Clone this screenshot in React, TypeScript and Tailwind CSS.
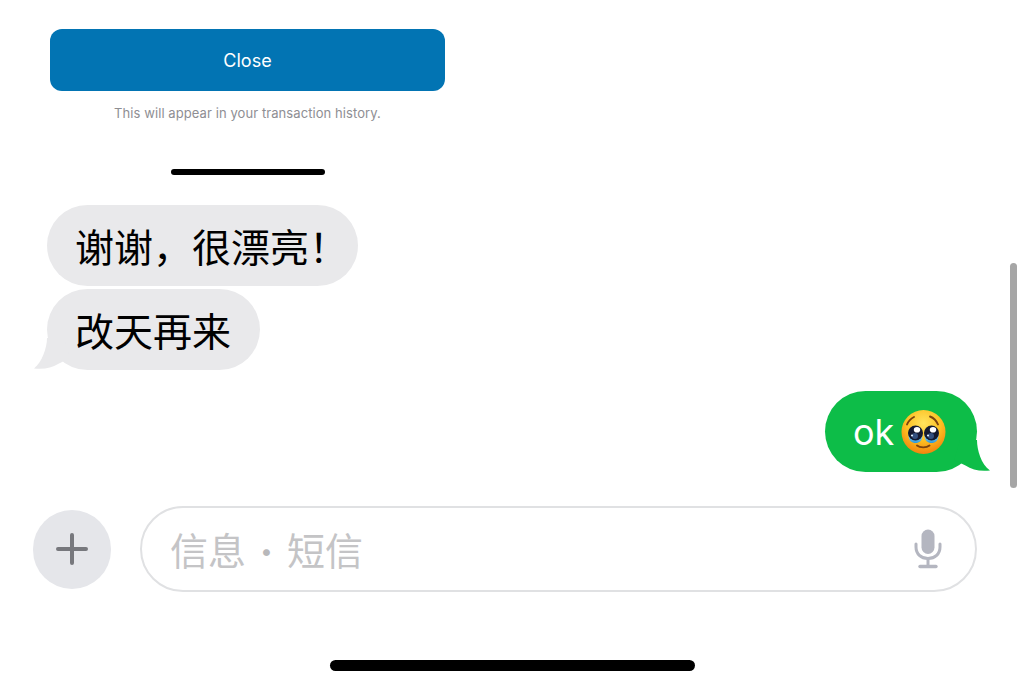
import React from "react";

const cjk = "font-['Inter','Noto_Sans_CJK_SC',sans-serif]";

function LeftTail() {
  return (
    <svg className="absolute left-[-13px] bottom-0 w-[40px] h-[32px]" viewBox="0 0 40 32">
      <path d="M13 0 C13 10 8 24 0 30.500 C10 31.500 18 30 24 26 L36 20 L30 0 Z" fill="#e9e9eb" />
    </svg>
  );
}

function RightTail() {
  return (
    <svg className="absolute right-[-13px] bottom-0 w-[40px] h-[32px]" viewBox="0 0 40 32">
      <path d="M27 0 C27 10 31 24 40 30.500 C30 31.500 22 30 15.500 25.500 L4 20 L10 0 Z" fill="#0dbd48" />
    </svg>
  );
}

function Emoji() {
  return (
    <svg width="45" height="46" viewBox="0 0 44 46" className="shrink-0">
      <defs>
        <radialGradient id="face" cx="50%" cy="30%" r="72%">
          <stop offset="0%" stopColor="#ffe45e" />
          <stop offset="55%" stopColor="#fdc022" />
          <stop offset="100%" stopColor="#f2800c" />
        </radialGradient>
        <linearGradient id="tear" x1="0" y1="0" x2="0" y2="1">
          <stop offset="0%" stopColor="#9ee0f7" />
          <stop offset="100%" stopColor="#2a97dc" />
        </linearGradient>
      </defs>
      <circle cx="22" cy="23" r="22" fill="url(#face)" />
      <path d="M5.500 15.500 C7 12 9.500 9.500 12.500 8" stroke="#7a4310" strokeWidth="1.900" fill="none" strokeLinecap="round" />
      <path d="M36.500 15.500 C35 12 32.500 9 28.500 7.500" stroke="#7a4310" strokeWidth="1.900" fill="none" strokeLinecap="round" />
      <path d="M7 26 C7 32 10.500 34 14 34 C17.500 34 21 32 21 26 Z" fill="url(#tear)" />
      <path d="M23 26 C23 32 26.500 34 30 34 C33.500 34 37 32 37 26 Z" fill="url(#tear)" />
      <circle cx="14" cy="24" r="7.500" fill="#141a30" />
      <circle cx="30" cy="24" r="7.500" fill="#141a30" />
      <circle cx="13.500" cy="27" r="3" fill="#33507f" />
      <circle cx="29.500" cy="27" r="3" fill="#33507f" />
      <ellipse cx="15.500" cy="20.800" rx="3.200" ry="2.800" fill="#ffffff" />
      <ellipse cx="31.500" cy="20.800" rx="3.200" ry="2.800" fill="#ffffff" />
      <circle cx="10.500" cy="26.500" r="1.100" fill="#dbeeff" />
      <circle cx="26.500" cy="26.500" r="1.100" fill="#dbeeff" />
      <path d="M15.500 36.500 C18.500 39 25 39 28 36.500" stroke="#7a4310" strokeWidth="1.900" fill="none" strokeLinecap="round" />
    </svg>
  );
}

function Mic() {
  return (
    <svg width="28" height="40" viewBox="0 0 28 40">
      <rect x="7.500" y="0.500" width="13" height="24.500" rx="6.500" fill="#b4b6c0" />
      <path d="M2 15 V18 C2 25 7 29.500 14 29.500 C21 29.500 26 25 26 18 V15" stroke="#b4b6c0" strokeWidth="3" fill="none" strokeLinecap="round" />
      <path d="M14 29.500 V36" stroke="#b4b6c0" strokeWidth="3" />
      <path d="M6 37.500 H22" stroke="#b4b6c0" strokeWidth="3.400" strokeLinecap="round" />
    </svg>
  );
}

export default function App() {
  return (
    <div className={`relative w-[1024px] h-[690px] overflow-hidden bg-white ${cjk}`}>
      <div className="absolute left-[1010px] top-[263px] w-[7px] h-[225px] rounded-full bg-[#a6a6a6]" />

      <div className="flex flex-col pt-[29px]">
        <div className="ml-[50px] w-[395px] flex flex-col items-center">
          <div className="w-full h-[62px] rounded-[12px] bg-[#0274b3] flex items-center justify-center text-white text-[18px]">
            Close
          </div>
          <div className="mt-[13px] text-[13px] leading-[18px] tracking-[0.08px] text-[#8e8e93]">
            This will appear in your transaction history.
          </div>
          <div className="mt-[47px] w-[154px] h-[6px] rounded-full bg-black" />
        </div>

        <div className="mt-[30px] ml-[47px] flex flex-col items-start gap-[3px]">
          <div className="h-[81px] w-[311px] pl-[28px] pt-[3px] rounded-[40.500px] bg-[#e9e9eb] flex items-center text-[39px] leading-none text-black">
            谢谢，很漂亮！
          </div>
          <div className="relative h-[81px] w-[213px] pl-[28px] pt-[3px] rounded-[40.500px] bg-[#e9e9eb] flex items-center text-[39px] leading-none text-black">
            <LeftTail />
            <span className="relative">改天再来</span>
          </div>
        </div>

        <div className="mt-[21px] ml-[825px] relative w-[152px] h-[81px] rounded-[40.500px] bg-[#0dbd48] flex items-center pl-[28px] text-white text-[36px] leading-none">
          <RightTail />
          <span className="relative">ok</span>
          <span className="relative ml-[7px]"><Emoji /></span>
        </div>

        <div className="mt-[34px] ml-[33px] w-[944px] flex items-center gap-[29px]">
          <div className="w-[78px] h-[79px] shrink-0 rounded-full bg-[#e5e6ea] flex items-center justify-center">
            <svg width="32" height="32" viewBox="0 0 32 32">
              <path d="M16 2 V30 M2 16 H30" stroke="#77787d" strokeWidth="4" strokeLinecap="round" />
            </svg>
          </div>
          <div className="flex-1 h-[86px] rounded-[43px] border-[2.500px] border-[#e0e1e3] flex items-center pl-[28px] pr-[33px] justify-between">
            <span className="flex items-center pt-[3px] text-[38px] leading-none text-[#c4c4c6]">
              <span>信息</span>
              <span className="w-[41px] text-center text-[22px] text-[#b8b8ba]">•</span>
              <span>短信</span>
            </span>
            <Mic />
          </div>
        </div>

        <div className="mt-[68px] ml-[330px] w-[365px] h-[11px] rounded-full bg-black" />
      </div>
    </div>
  );
}
